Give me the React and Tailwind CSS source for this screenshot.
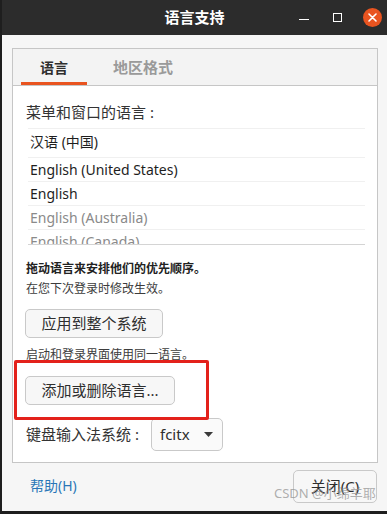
const font = { fontFamily: '"Noto Sans", "Noto Sans CJK SC", sans-serif' };

const languages = [
  { name: '汉语 (中国)', muted: false },
  { name: 'English (United States)', muted: false },
  { name: 'English', muted: false },
  { name: 'English (Australia)', muted: true },
  { name: 'English (Canada)', muted: true },
];

const TitleBar = () => (
  <div className="relative flex h-[35px] shrink-0 items-center justify-center bg-[#2c2c2c]">
    <span className="text-[15px] font-bold text-white">语言支持</span>
    {/* window controls */}
    <div className="absolute right-[5px] top-0 flex h-full items-center">
      <div className="mr-[24px] mt-[4px] h-[1.5px] w-[10px] bg-white" />
      <div className="mr-[21px] h-[9px] w-[9px] border-[1.5px] border-white" />
      <div className="flex h-[19px] w-[19px] items-center justify-center rounded-full bg-[#e95420]">
        <svg width="9" height="9" viewBox="0 0 9 9">
          <path d="M1 1 L8 8 M8 1 L1 8" stroke="white" strokeWidth="1.6" strokeLinecap="round" />
        </svg>
      </div>
    </div>
  </div>
);

const Button = ({ children, className = '' }) => (
  <div
    className={`flex items-center justify-center rounded-[5px] border border-[#c9c9c9] bg-[#f7f7f7] text-[15px] text-[#2e2e2e] ${className}`}
  >
    {children}
  </div>
);

export default function App() {
  return (
    <div
      className="relative flex h-[514px] w-[387px] flex-col overflow-hidden border-b-[3px] border-l-2 border-[#1e1e1e] bg-[#f6f6f6]"
      style={font}
    >
      <TitleBar />

      <div className="flex flex-1 flex-col pl-[10px] pr-[9px] pt-[13px]">
        {/* notebook */}
        <div className="flex flex-col border border-[#c6c6c6]">
          <div className="flex h-[37px] items-stretch border-b border-[#c6c6c6] bg-[#f3f3f3] pl-2">
            <div className="flex items-center border-b-[3px] border-[#e95420] px-[19px] pt-[3px] text-[14px] font-bold text-[#2e2e2e]">
              语言
            </div>
            <div className="ml-[7px] flex items-center px-[19px] text-[15px] font-bold text-[#9a9a9a]">
              地区格式
            </div>
          </div>

          <div className="flex flex-col bg-white pb-[11px] pl-[13px] pr-[12px] pt-[16px] text-[#333]">
            <div className="text-[15px] leading-[20px]">菜单和窗口的语言 :</div>

            <div className="ml-[2px] mt-[6px] h-[117px] overflow-hidden border-b border-t border-b-[#d4d4d4] border-t-[#f0f0f0]">
              {languages.map((l, i) => (
                <div
                  key={l.name}
                  className={`flex items-center border-b border-[#f0f0f0] pl-[2px] text-[14px] ${
                    i === 0 ? 'h-[29px] pb-[3px]' : 'h-[24px]'
                  } ${l.muted ? 'text-[#8a8a8a]' : 'text-[#1e1e1e]'}`}
                >
                  {l.name}
                </div>
              ))}
            </div>

            <div className="mt-[14px] text-[12px] font-bold leading-[20px] text-[#222]">
              拖动语言来安排他们的优先顺序。
            </div>
            <div className="text-[12px] leading-[20px] text-[#3c3c3c]">在您下次登录时修改生效。</div>

            <Button className="mt-[10px] h-[29px] w-[138px] -ml-px">应用到整个系统</Button>

            <div className="mt-[7px] text-[12px] leading-[20px] text-[#3c3c3c]">启动和登录界面使用同一语言。</div>

            <Button className="mt-[11px] h-[29px] w-[150px] -ml-px">添加或删除语言...</Button>

            <div className="mt-[13px] flex items-center">
              <span className="w-[125px] text-[15px] text-[#333]">键盘输入法系统 :</span>
              <div className="flex h-[33px] w-[72px] items-center justify-between rounded-[5px] border border-[#c9c9c9] bg-[#fafafa] pl-[8px] pr-[9px]">
                <span className="text-[15px] text-[#2e2e2e]">fcitx</span>
                <svg width="9" height="5" viewBox="0 0 9 5">
                  <path d="M0 0 L9 0 L4.5 5 Z" fill="#3a3a3a" />
                </svg>
              </div>
            </div>
          </div>
        </div>

        {/* footer */}
        <div className="flex items-start justify-between pr-px">
          <span className="ml-[18px] mt-[12px] text-[14px] text-[#2a76b8]">帮助(H)</span>
          <Button className="mt-[7px] h-[33px] w-[84px]">关闭(C)</Button>
        </div>
      </div>

      {/* red annotation box */}
      <div className="absolute left-[12px] top-[360px] h-[60px] w-[195px] rounded-[2px] border-[3px] border-[#e3211b]" />

      {/* watermark */}
      <div className="absolute left-[272px] top-[484px] text-[13px] text-[#9a9a9a]/80">CSDN @小绵羊耶</div>
    </div>
  );
}
